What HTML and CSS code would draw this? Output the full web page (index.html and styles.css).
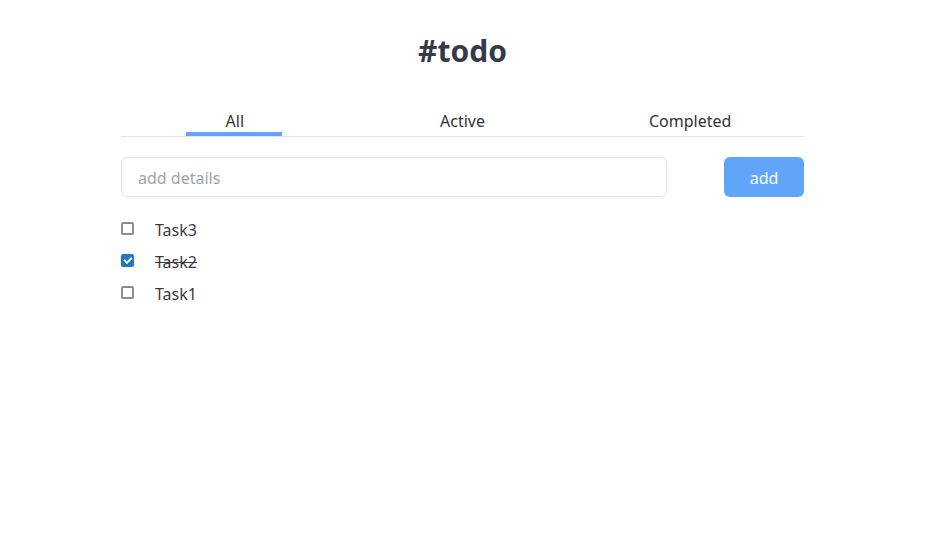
FILE: index.html
```html
<!DOCTYPE html>
<html lang="en">
<head>
<meta charset="utf-8">
<title>#todo</title>
<link rel="stylesheet" href="styles.css">
</head>
<body>
<main class="app">
  <h1 class="title">#todo</h1>
  <nav class="tabs">
    <div class="tab tab-active"><span class="tab-label">All</span></div>
    <div class="tab"><span class="tab-label">Active</span></div>
    <div class="tab"><span class="tab-label">Completed</span></div>
  </nav>
  <form class="add-form">
    <input class="add-input" type="text" placeholder="add details">
    <button class="add-button" type="button">add</button>
  </form>
  <ul class="task-list">
    <li class="task"><input class="task-check" type="checkbox"><span class="task-text">Task3</span></li>
    <li class="task task-done"><input class="task-check" type="checkbox" checked><span class="task-text">Task2</span></li>
    <li class="task"><input class="task-check" type="checkbox"><span class="task-text">Task1</span></li>
  </ul>
</main>
</body>
</html>
```
FILE: styles.css
```css
* { box-sizing: border-box; }
body {
  margin: 0;
  font-family: "Noto Sans", "Open Sans", sans-serif;
  color: #333333;
  background: #ffffff;
}
.app {
  width: 683px;
  margin-left: 121px;
  display: flex;
  flex-direction: column;
}
.title {
  margin: 31px 0 0;
  font-size: 30px;
  line-height: 40px;
  font-weight: 700;
  text-align: center;
  color: #333b4a;
}
.tabs {
  margin-top: 39px;
  display: grid;
  grid-template-columns: repeat(3, 1fr);
  border-bottom: 1px solid #e4e4e7;
}
.tab {
  display: flex;
  flex-direction: column;
  align-items: center;
  font-size: 16px;
  line-height: 22px;
  color: #333333;
}
.tab::after {
  content: "";
  display: block;
  height: 4px;
}
.tab-active::after {
  width: 96px;
  margin-right: 2px;
  background: #60a5fa;
}
.add-form {
  margin-top: 20px;
  display: flex;
  justify-content: space-between;
}
.add-input {
  width: 546px;
  height: 40px;
  border: 1px solid #e2e4e8;
  border-radius: 6px;
  padding: 2px 16px 0;
  font-family: inherit;
  font-size: 16px;
  color: #333;
  outline: none;
}
.add-input::placeholder { color: #9ca3af; }
.add-button {
  width: 80px;
  height: 40px;
  border: none;
  border-radius: 6px;
  padding: 2px 0 0;
  background: #60a5fa;
  color: #ffffff;
  font-family: inherit;
  font-size: 16px;
}
.task-list {
  list-style: none;
  margin: 17px 0 0;
  padding: 0;
  display: flex;
  flex-direction: column;
}
.task {
  display: flex;
  align-items: center;
  height: 32px;
}
.task-check {
  appearance: none;
  -webkit-appearance: none;
  margin: 0 21px 3px 0;
  width: 13px;
  height: 13px;
  border: 2px solid #8b8b96;
  border-radius: 2px;
  background: #ffffff;
  display: grid;
  place-items: center;
}
.task-check:checked {
  border-color: #1b7bbd;
  background: #1b7bbd;
}
.task-check:checked::after {
  content: "";
  width: 6px;
  height: 3px;
  border-left: 2px solid #ffffff;
  border-bottom: 2px solid #ffffff;
  transform: translateY(-1px) rotate(-45deg);
}
.task-text {
  font-size: 16px;
  color: #3a3a3a;
}
.task-done .task-text { text-decoration: line-through; }
```
